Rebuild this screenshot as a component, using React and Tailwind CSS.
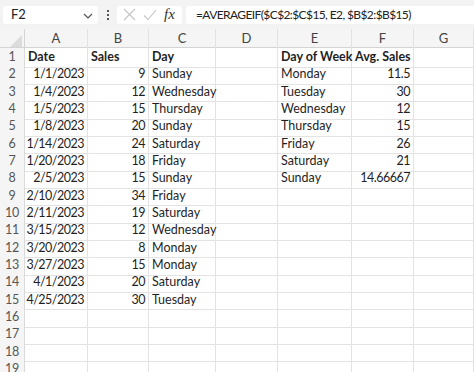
import React from "react";

const cols = ["A", "B", "C", "D", "E", "F", "G"];
const data = {
  1: { A: ["Date", "l", true], B: ["Sales", "l", true], C: ["Day", "l", true], E: ["Day of Week", "l", true], F: ["Avg. Sales", "l", true] },
  2: { A: ["1/1/2023", "r"], B: ["9", "r"], C: ["Sunday", "l"], E: ["Monday", "l"], F: ["11.5", "r"] },
  3: { A: ["1/4/2023", "r"], B: ["12", "r"], C: ["Wednesday", "l"], E: ["Tuesday", "l"], F: ["30", "r"] },
  4: { A: ["1/5/2023", "r"], B: ["15", "r"], C: ["Thursday", "l"], E: ["Wednesday", "l"], F: ["12", "r"] },
  5: { A: ["1/8/2023", "r"], B: ["20", "r"], C: ["Sunday", "l"], E: ["Thursday", "l"], F: ["15", "r"] },
  6: { A: ["1/14/2023", "r"], B: ["24", "r"], C: ["Saturday", "l"], E: ["Friday", "l"], F: ["26", "r"] },
  7: { A: ["1/20/2023", "r"], B: ["18", "r"], C: ["Friday", "l"], E: ["Saturday", "l"], F: ["21", "r"] },
  8: { A: ["2/5/2023", "r"], B: ["15", "r"], C: ["Sunday", "l"], E: ["Sunday", "l"], F: ["14.66667", "r"] },
  9: { A: ["2/10/2023", "r"], B: ["34", "r"], C: ["Friday", "l"] },
  10: { A: ["2/11/2023", "r"], B: ["19", "r"], C: ["Saturday", "l"] },
  11: { A: ["3/15/2023", "r"], B: ["12", "r"], C: ["Wednesday", "l"] },
  12: { A: ["3/20/2023", "r"], B: ["8", "r"], C: ["Monday", "l"] },
  13: { A: ["3/27/2023", "r"], B: ["15", "r"], C: ["Monday", "l"] },
  14: { A: ["4/1/2023", "r"], B: ["20", "r"], C: ["Saturday", "l"] },
  15: { A: ["4/25/2023", "r"], B: ["30", "r"], C: ["Tuesday", "l"] },
};

const grid = "grid grid-cols-[25px_63px_61px_67px_62px_74px_62px_60px]";
const font = { fontFamily: "Lato, 'Open Sans', sans-serif" };

export default function App() {
  const rows = Array.from({ length: 19 }, (_, i) => i + 1);
  return (
    <div className="w-[474px] h-[372px] overflow-hidden bg-white text-[#1f1f1f]" style={font}>
      {/* formula bar */}
      <div className="h-[29px] bg-[#f3f3f3] flex items-center pl-[3px] gap-0">
        <div className="w-[95px] h-[18px] bg-white rounded-[3px] flex items-center pl-[8px] pr-[5px] text-[13px] text-[#222]">
          <span className="flex-1">F2</span>
          <svg width="10" height="6" viewBox="0 0 10 6" className="mt-[2px]">
            <path d="M1 1 L5 5 L9 1" stroke="#555" strokeWidth="1.2" fill="none" />
          </svg>
        </div>
        <div className="w-[19px] flex flex-col items-center gap-[2px]">
          <div className="w-[2px] h-[2px] bg-[#555]" />
          <div className="w-[2px] h-[2px] bg-[#555]" />
          <div className="w-[2px] h-[2px] bg-[#555]" />
        </div>
        <div className="w-[65px] h-[18px] bg-white rounded-[3px] flex items-center pl-[6px] gap-[7px]">
          <svg width="13" height="13" viewBox="0 0 13 13">
            <path d="M1 1 L12 12 M12 1 L1 12" stroke="#c4c4c4" strokeWidth="1.1" fill="none" />
          </svg>
          <svg width="14" height="12" viewBox="0 0 14 12">
            <path d="M1 6.5 L5 10.5 L13 1" stroke="#c4c4c4" strokeWidth="1.1" fill="none" />
          </svg>
          <span className="text-[15px] italic text-[#333] leading-none" style={{ fontFamily: "'Liberation Serif', serif" }}>
            fx
          </span>
        </div>
        <div className="ml-[4px] flex-1 h-[18px] bg-white rounded-l-[3px] flex items-center pl-[10px] text-[12px] tracking-[-0.6px] text-[#222] whitespace-nowrap">
          =AVERAGEIF($C$2:$C$15, E2, $B$2:$B$15)
        </div>
      </div>
      {/* column header */}
      <div className={`${grid} h-[19px] bg-[#f5f5f5] border-b border-[#d4d4d4]`}>
        <div className="relative border-r border-[#d4d4d4]">
          <svg width="12" height="12" viewBox="0 0 12 12" className="absolute right-[2px] bottom-[2px]">
            <path d="M12 0 L12 12 L0 12 Z" fill="#dcdcdc" />
          </svg>
        </div>
        {cols.map((c) => (
          <div key={c} className="flex items-center justify-center text-[13px] text-[#444] border-r border-[#e2e2e2]">
            {c}
          </div>
        ))}
        <div />
      </div>
      {/* rows */}
      {rows.map((r) => (
        <div key={r} className={`${grid} h-[17.33px]`}>
          <div className="bg-[#f5f5f5] border-r border-b border-[#dadada] flex items-center justify-center text-[12.5px] tracking-[-0.3px] text-[#555]">
            {r}
          </div>
          {[...cols, "H"].map((c) => {
            const cell = data[r] && data[r][c];
            const right = cell && cell[1] === "r";
            return (
              <div
                key={c}
                className={`min-w-0 border-r border-b border-[#e3e3e3] flex items-center px-[3px] text-[12.5px] whitespace-nowrap overflow-visible ${
                  right ? "justify-end tracking-[-0.5px]" : "justify-start"
                } ${cell && cell[2] ? "font-bold" : ""}`}
              >
                {cell ? cell[0] : ""}
              </div>
            );
          })}
        </div>
      ))}
    </div>
  );
}
